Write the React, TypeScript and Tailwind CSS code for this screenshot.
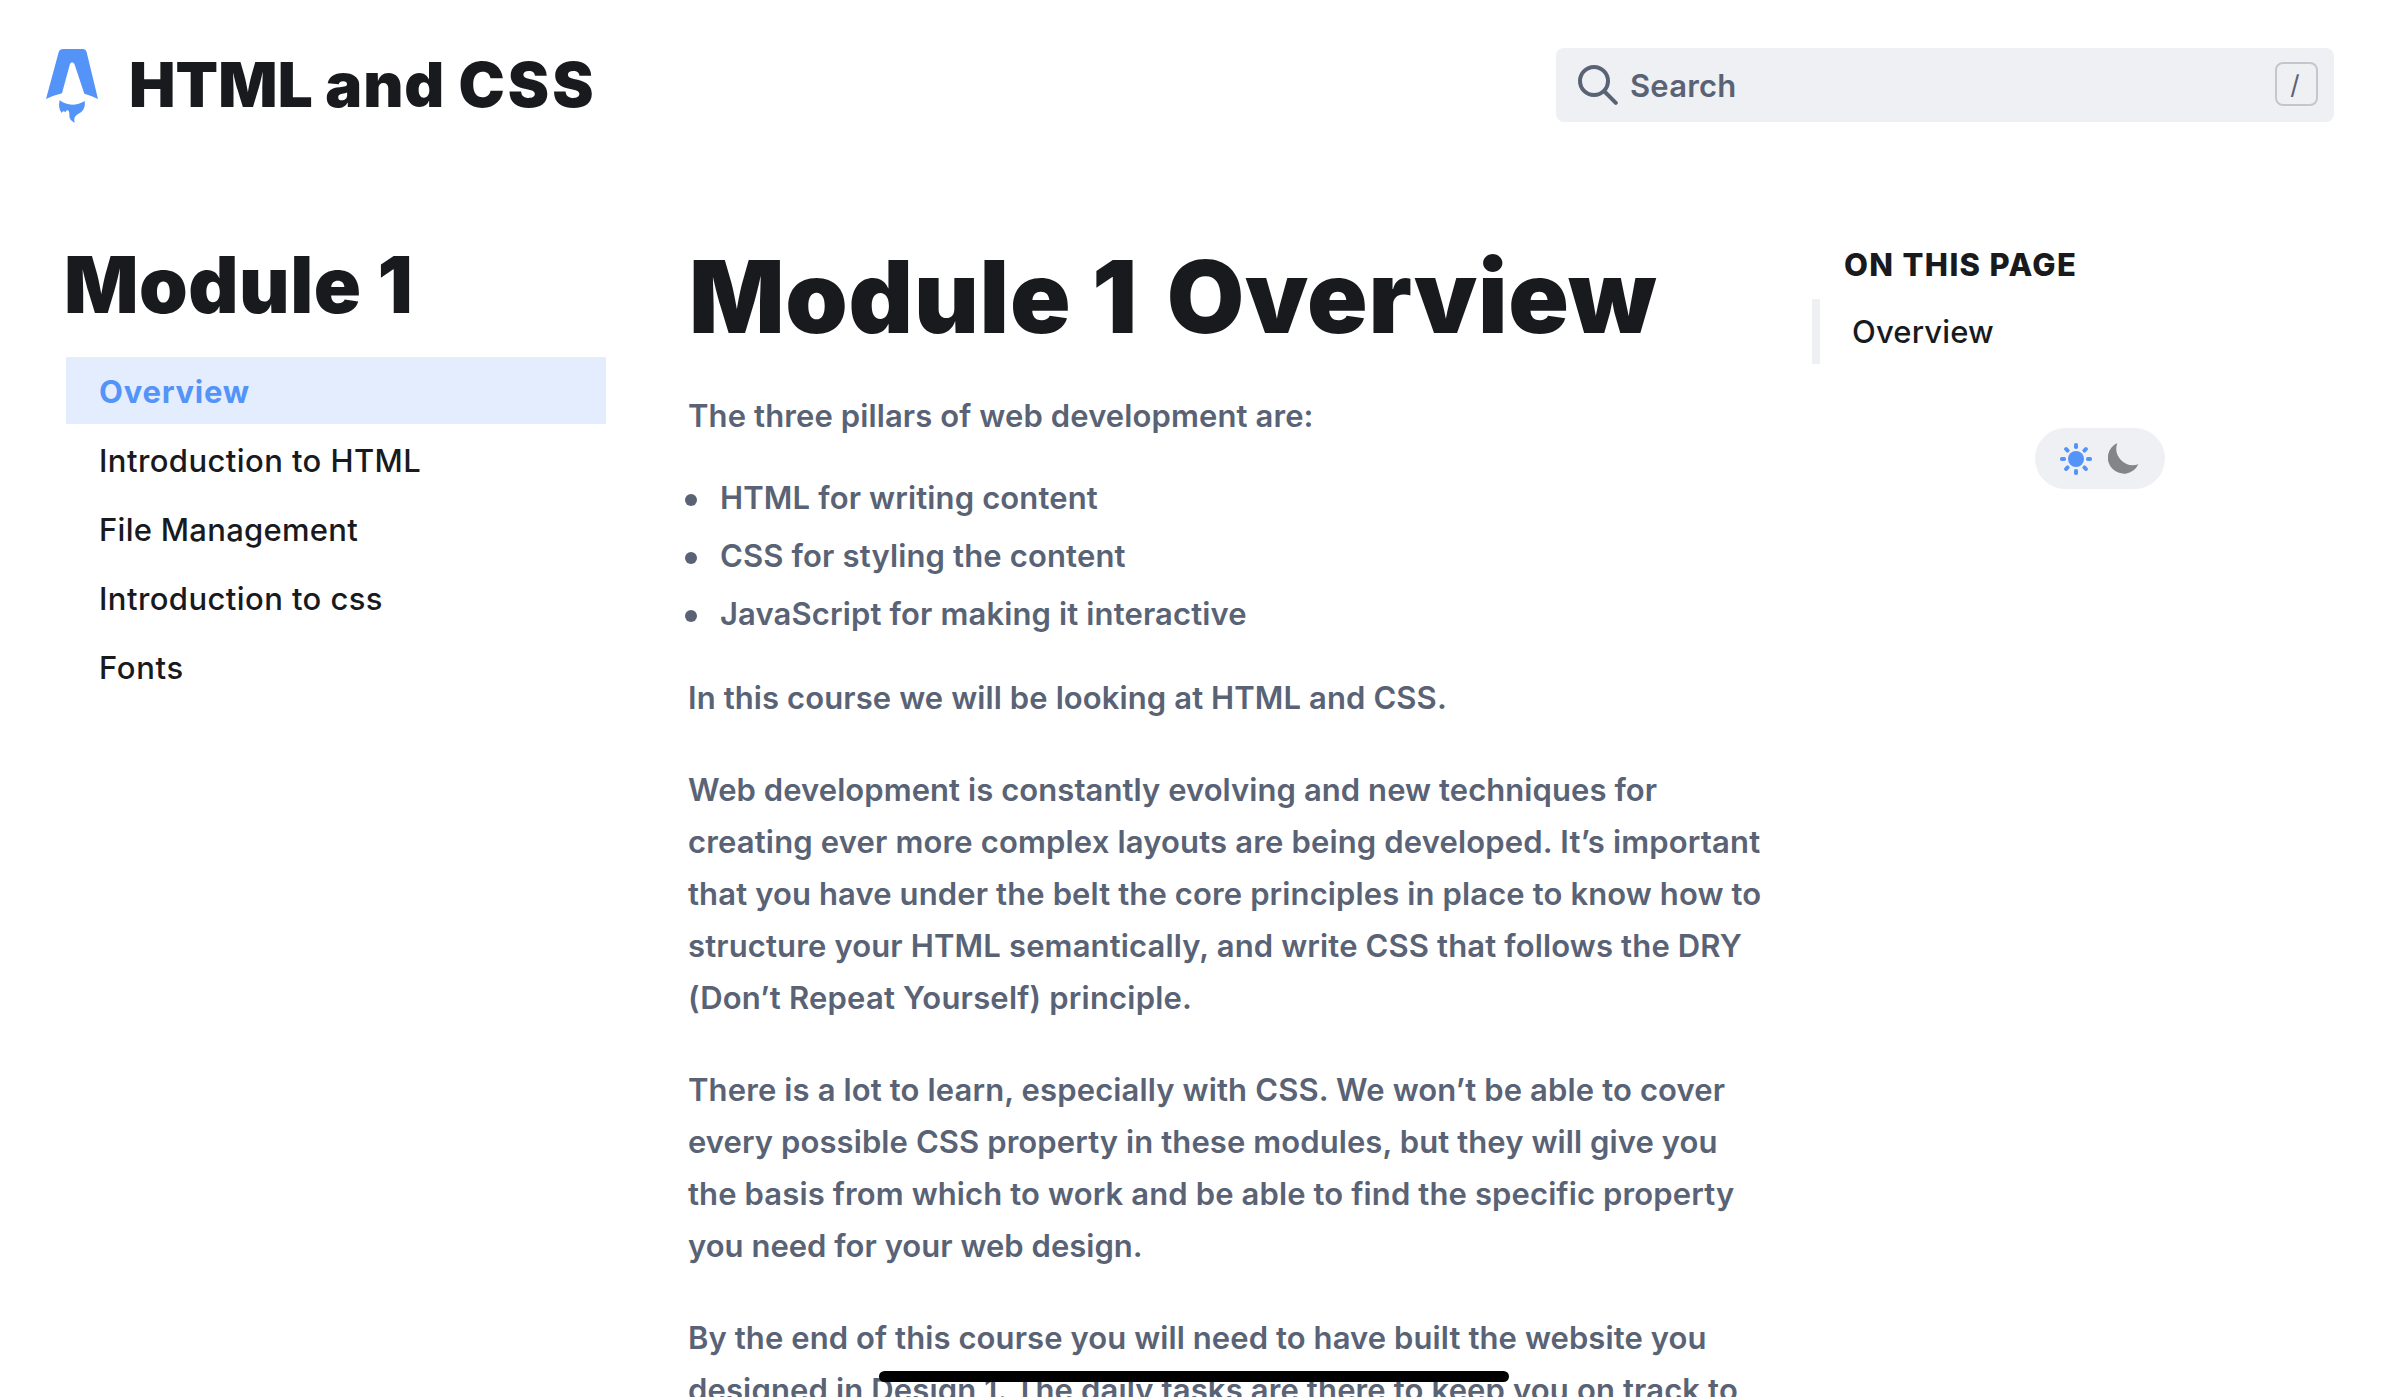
const navItems: { label: string; className: string }[] = [
  { label: 'Overview', className: 'bg-[#e3edfd] font-bold tracking-[0.75px] text-[#5494f9]' },
  { label: 'Introduction to HTML', className: 'font-medium tracking-[0.42px]' },
  { label: 'File Management', className: 'font-medium tracking-[0.28px]' },
  { label: 'Introduction to css', className: 'font-medium tracking-[0.42px]' },
  { label: 'Fonts', className: 'font-medium tracking-[0.7px]' },
];

const bullets: { text: string; tracking: string }[] = [
  { text: 'HTML for writing content', tracking: 'tracking-[0.14px]' },
  { text: 'CSS for styling the content', tracking: 'tracking-[0.15px]' },
  { text: 'JavaScript for making it interactive', tracking: 'tracking-[0.14px]' },
];

const paragraphs: { text: string; tracking: string }[][] = [
  [{ text: 'In this course we will be looking at HTML and CSS.', tracking: 'tracking-[0.1px]' }],
  [
    { text: 'Web development is constantly evolving and new techniques for', tracking: 'tracking-[0.07px]' },
    { text: 'creating ever more complex layouts are being developed. It’s important', tracking: 'tracking-[0.16px]' },
    { text: 'that you have under the belt the core principles in place to know how to', tracking: 'tracking-[0.12px]' },
    { text: 'structure your HTML semantically, and write CSS that follows the DRY', tracking: 'tracking-[0.14px]' },
    { text: '(Don’t Repeat Yourself) principle.', tracking: 'tracking-[0.2px]' },
  ],
  [
    { text: 'There is a lot to learn, especially with CSS. We won’t be able to cover', tracking: 'tracking-[0.13px]' },
    { text: 'every possible CSS property in these modules, but they will give you', tracking: 'tracking-[0.09px]' },
    { text: 'the basis from which to work and be able to find the specific property', tracking: 'tracking-[0.12px]' },
    { text: 'you need for your web design.', tracking: 'tracking-[0.02px]' },
  ],
  [
    { text: 'By the end of this course you will need to have built the website you', tracking: 'tracking-[0.09px]' },
    { text: 'designed in Design 1. The daily tasks are there to keep you on track to', tracking: 'tracking-[0.14px]' },
  ],
];

function RocketLogo() {
  return (
    <svg viewBox="0 0 210 270" className="h-[90px] w-[70px]" fill="#5494f9" aria-hidden="true">
      <path d="M70 27H128Q137 27 140 37L174 177Q155 167 133 161L103 71Q96 62 90 71L66 160Q42 166 18 177L56 37Q59 27 70 27Z" />
      <path d="M59 181Q78 194 96 194Q117 194 134 183Q138 204 123 217C108 226 100 229 104 248C92 243 87 234 88 223Q88 210 81 211Q77 213 77 217Q68 209 65 219Q53 205 59 181Z" />
    </svg>
  );
}

function SunIcon() {
  return (
    <svg viewBox="0 0 32 32" className="size-8" fill="#5494f9" aria-hidden="true">
      <circle cx="16" cy="16" r="8" />
      {[0, 45, 90, 135, 180, 225, 270, 315].map((angle) => (
        <rect key={angle} x="14" y="0" width="4" height="6" rx="1.8" transform={`rotate(${angle} 16 16)`} />
      ))}
    </svg>
  );
}

function Header() {
  return (
    <header className="flex h-[170px] items-center justify-between pr-[54px] pl-10">
      <div className="flex items-center gap-[19px]">
        <RocketLogo />
        <span className="text-[62px] leading-[80px] font-black">
          <span className="tracking-[0.1px]">HTML </span>
          <span className="tracking-[0.9px]">and </span>
          <span className="tracking-[3px]">CSS</span>
        </span>
      </div>
      <div className="flex h-[74px] w-[778px] items-center rounded-lg bg-[#eff0f3] pr-4 pl-[18px] text-[#596375]">
        <svg viewBox="0 0 44 44" className="size-11" fill="none" stroke="currentColor" strokeWidth="4" strokeLinecap="round" aria-hidden="true">
          <circle cx="20" cy="18" r="14" />
          <path d="M30.5 28.5L41.8 39.8" />
        </svg>
        <span className="ml-3 flex-1 pt-0.5 text-[31px] font-semibold tracking-[0.2px]">Search</span>
        <kbd className="mb-0.5 flex h-11 w-[43px] items-center justify-center rounded-lg border-2 border-[#c2c6cf] pr-[3px] font-['Inter',sans-serif] text-[26px] font-normal">
          /
        </kbd>
      </div>
    </header>
  );
}

function Sidebar() {
  return (
    <aside className="w-[540px] pt-[75px]">
      <h2 className="-ml-0.5 text-[78px] leading-[80px] font-black tracking-[0.45px]">Module 1</h2>
      <ul className="mt-8 flex flex-col gap-0.5">
        {navItems.map(({ label, className }) => (
          <li key={label} className={`h-[67px] pt-px pl-[33px] leading-[67px] ${className}`}>
            {label}
          </li>
        ))}
      </ul>
    </aside>
  );
}

function Article() {
  return (
    <article className="ml-[82px] w-[1091px] pt-[67px] leading-[52px] whitespace-nowrap text-[#596375]">
      <h1 className="ml-px text-[100px] leading-[120px] font-black text-[#181a1e]">
        <span className="tracking-[0.75px]">Module 1 </span>
        <span className="ml-2 tracking-[0.7px]">Overview</span>
      </h1>
      <p className="mt-[33px] tracking-[0.11px]">The three pillars of web development are:</p>
      <ul className="mt-[30px] mb-8 flex flex-col gap-1.5">
        {bullets.map(({ text, tracking }) => (
          <li key={text} className={`flex items-center ${tracking}`}>
            <span className="mt-[3px] mr-[23px] -ml-[3px] size-3 rounded-full bg-[#596375]" />
            {text}
          </li>
        ))}
      </ul>
      <div className="flex flex-col gap-10">
        {paragraphs.map((lines) => (
          <p key={lines[0].text}>
            {lines.map(({ text, tracking }) => (
              <span key={text} className={`block ${tracking}`}>
                {text}
              </span>
            ))}
          </p>
        ))}
      </div>
    </article>
  );
}

function TableOfContents() {
  return (
    <aside className="ml-[33px] pt-[75px]">
      <h2 className="pl-8 leading-10 font-extrabold tracking-[1.35px]">ON THIS PAGE</h2>
      <a className="mt-3.5 block h-[65px] border-l-8 border-[#eff0f3] pl-8 leading-[65px] font-medium tracking-[0.15px]">Overview</a>
      <div className="mt-16 ml-[223px] flex h-[61px] w-[130px] items-center gap-4 rounded-full bg-[#eff0f3] pl-[25px]">
        <SunIcon />
        <svg viewBox="249 74 93 93" className="size-[31px]" fill="#848589" aria-hidden="true">
          <path d="M277 74A48 48 0 1 0 340 138A50 50 0 0 1 277 74Z" />
        </svg>
      </div>
    </aside>
  );
}

export default function App() {
  return (
    <div className="relative h-[1397px] w-[2388px] overflow-hidden bg-white font-['Inter',sans-serif] text-[31px] font-semibold text-[#181a1e]">
      <Header />
      <main className="flex items-start pl-[66px]">
        <Sidebar />
        <Article />
        <TableOfContents />
      </main>
      <div className="absolute bottom-[15px] left-[879px] h-[11px] w-[630px] rounded-full bg-black" />
    </div>
  );
}
